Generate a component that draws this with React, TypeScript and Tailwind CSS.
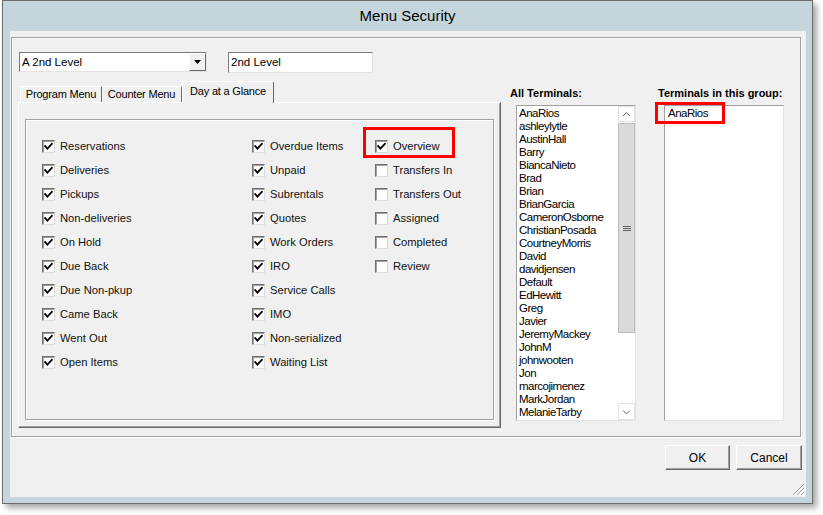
import React from 'react';

const col1 = ['Reservations', 'Deliveries', 'Pickups', 'Non-deliveries', 'On Hold', 'Due Back', 'Due Non-pkup', 'Came Back', 'Went Out', 'Open Items'];
const col2 = ['Overdue Items', 'Unpaid', 'Subrentals', 'Quotes', 'Work Orders', 'IRO', 'Service Calls', 'IMO', 'Non-serialized', 'Waiting List'];
const col3 = [
  { label: 'Overview', checked: true },
  { label: 'Transfers In', checked: false },
  { label: 'Transfers Out', checked: false },
  { label: 'Assigned', checked: false },
  { label: 'Completed', checked: false },
  { label: 'Review', checked: false },
];

const terminals = [
  'AnaRios', 'ashleylytle', 'AustinHall', 'Barry', 'BiancaNieto', 'Brad', 'Brian', 'BrianGarcia',
  'CameronOsborne', 'ChristianPosada', 'CourtneyMorris', 'David', 'davidjensen', 'Default', 'EdHewitt',
  'Greg', 'Javier', 'JeremyMackey', 'JohnM', 'johnwooten', 'Jon', 'marcojimenez', 'MarkJordan', 'MelanieTarby',
];

const CheckBox = ({ checked }: { checked: boolean }) => (
  <div className="flex h-[13px] w-[13px] shrink-0 items-center justify-center border border-[#6f6f6f] border-b-[#dcdcdc] border-r-[#dcdcdc] bg-white shadow-[inset_1px_1px_0_#a0a0a0]">
    {checked && (
      <svg viewBox="0 0 9 9" className="h-[9px] w-[9px]">
        <path d="M1.2 4.2 L3.4 6.6 L7.9 1.9" fill="none" stroke="#000" strokeWidth="1.9" strokeLinecap="square" />
      </svg>
    )}
  </div>
);

const CheckRow = ({ label, checked = true, children }: { label: string; checked?: boolean; children?: React.ReactNode }) => (
  <div className="relative flex h-[24.1px] items-center gap-[5px] text-[11.2px] text-[#111]">
    <CheckBox checked={checked} />
    <span className="whitespace-nowrap">{label}</span>
    {children}
  </div>
);

const Chevron = ({ down }: { down?: boolean }) => (
  <svg viewBox="0 0 9 6" className="h-[6px] w-[9px]">
    <polyline
      points={down ? '1,1.5 4.5,5 8,1.5' : '1,5 4.5,1.5 8,5'}
      fill="none"
      stroke="#606060"
      strokeWidth="1"
    />
  </svg>
);

const ScrollBar = () => (
  <div className="flex w-[17px] flex-col bg-white">
    <div className="flex h-[16px] items-center justify-center border border-[#e3e3e3] bg-white">
      <Chevron />
    </div>
    <div className="mt-px flex h-[210px] flex-col items-center justify-center gap-[1px] border border-[#bdbdbd] bg-[#dadada]">
      <div className="h-px w-[8px] bg-[#606060]" />
      <div className="h-px w-[8px] bg-[#606060]" />
      <div className="h-px w-[8px] bg-[#606060]" />
    </div>
    <div className="flex-1" />
    <div className="flex h-[17px] items-center justify-center border border-[#e3e3e3] bg-white">
      <Chevron down />
    </div>
  </div>
);

const Button = ({ label, w }: { label: string; w: string }) => (
  <button
    type="button"
    className={`${w} h-[25px] border border-l-white border-t-white border-r-[#696969] border-b-[#696969] bg-[#f0f0f0] text-[12px] text-black shadow-[inset_-1px_-1px_0_#a0a0a0]`}
  >
    {label}
  </button>
);

export default function App() {
  return (
    <div className="min-h-screen bg-white font-['Liberation_Sans',Arial,sans-serif]">
      <div className="ml-[2px] flex h-[504px] w-[811px] flex-col border border-[#6b6b6b] bg-[#c4d6dc] shadow-[4px_4px_6px_rgba(0,0,0,0.35)]">
        <div className="flex h-[30px] items-center justify-center text-[15px] text-black">Menu Security</div>

        <div className="relative mb-[6px] ml-[7px] mr-[6px] flex flex-1 flex-col bg-[#f0f0f0] pt-[6px]">
          {/* main panel */}
          <div className="ml-[1px] mr-[5px] flex h-[400px] border border-[#a0a0a0] pl-[6px] shadow-[1px_1px_0_#fff,inset_1px_1px_0_#fff]">
            <div className="flex w-[483px] flex-col pt-[14px]">
              <div className="flex h-[21px] items-start">
                <div className="ml-[1px] flex h-[20px] w-[188px] border border-[#7a7a7a] border-b-[#e3e3e3] border-r-[#e3e3e3] bg-white">
                  <span className="flex-1 pl-[2px] text-[11.5px] leading-[18px] text-black">A 2nd Level</span>
                  <div className="flex w-[17px] items-center justify-center border border-l-white border-t-white border-r-[#696969] border-b-[#696969] bg-[#f0f0f0]">
                    <svg viewBox="0 0 7 4" className="h-[4px] w-[7px]">
                      <polygon points="0,0 7,0 3.5,4" fill="#000" />
                    </svg>
                  </div>
                </div>
                <div className="ml-[21px] h-[21px] w-[145px] border border-[#7a7a7a] border-b-[#e3e3e3] border-r-[#e3e3e3] bg-white pl-[2px] text-[11.5px] leading-[19px] text-black">
                  2nd Level
                </div>
              </div>

              <div className="mt-[8px] flex h-[21px] items-end pl-[2px] text-[11px] tracking-[-0.2px] text-black">
                <div className="flex h-[16px] w-[82px] items-center justify-center rounded-tl-[2px] border-l border-r border-t border-l-white border-r-[#696969] border-t-white">
                  Program Menu
                </div>
                <div className="flex h-[16px] w-[80px] items-center justify-center rounded-tr-[2px] border-r border-t border-r-[#696969] border-t-white">
                  Counter Menu
                </div>
                <div className="relative z-10 -mb-px flex h-[22px] w-[92px] items-start justify-center rounded-t-[2px] border-l border-r border-t border-l-white border-r-[#696969] border-t-white bg-[#f0f0f0] pt-[3px] leading-[13px]">
                  Day at a Glance
                </div>
              </div>

              {/* tab page */}
              <div className="flex h-[326px] flex-col border border-b-[#696969] border-l-white border-r-[#696969] border-t-white px-[6px] pb-[7px] pt-[16px] shadow-[inset_-1px_-1px_0_#a0a0a0]">
                <div className="flex flex-1 border border-[#a0a0a0] pl-[16px] pt-[14px] shadow-[1px_1px_0_#fff,inset_1px_1px_0_#fff]">
                  <div className="flex w-[210px] flex-col">
                    {col1.map((l) => (
                      <CheckRow key={l} label={l} />
                    ))}
                  </div>
                  <div className="flex w-[123px] flex-col">
                    {col2.map((l) => (
                      <CheckRow key={l} label={l} />
                    ))}
                  </div>
                  <div className="flex flex-col">
                    {col3.map((c) => (
                      <CheckRow key={c.label} label={c.label} checked={c.checked}>
                        {c.label === 'Overview' && (
                          <div className="absolute left-[-12px] top-[-7px] h-[31px] w-[92px] border-[3px] border-[#ff0000]" />
                        )}
                      </CheckRow>
                    ))}
                  </div>
                </div>
              </div>
            </div>

            {/* all terminals */}
            <div className="ml-[9px] flex flex-col pt-[49px]">
              <div className="h-[13px] text-[11px] font-bold leading-[13px] text-black">All Terminals:</div>
              <div className="ml-[6px] mt-[5px] flex h-[316px] w-[120px] overflow-hidden border border-[#a0a0a0] border-b-[#e3e3e3] border-r-[#e3e3e3] bg-white">
                <div className="flex-1 overflow-hidden pl-[2px] pt-[1px]">
                  {terminals.map((t) => (
                    <div key={t} className="whitespace-nowrap text-[11.5px] leading-[13px] tracking-[-0.5px] text-black">
                      {t}
                    </div>
                  ))}
                </div>
                <ScrollBar />
              </div>
            </div>

            {/* group terminals */}
            <div className="ml-[22px] flex flex-col pt-[49px]">
              <div className="h-[13px] whitespace-nowrap text-[11px] font-bold leading-[13px] text-black">Terminals in this group:</div>
              <div className="relative ml-[6px] mt-[5px] h-[316px] w-[120px] border border-[#a0a0a0] border-b-[#e3e3e3] border-r-[#e3e3e3] bg-white pl-[3px] pt-[1px]">
                <div className="whitespace-nowrap text-[11.5px] leading-[13px] tracking-[-0.5px] text-black">AnaRios</div>
                <div className="absolute left-[-10px] top-[-4px] h-[22px] w-[70px] border-[3px] border-[#ff0000]" />
              </div>
            </div>
          </div>

          <div className="mt-[8px] flex justify-end gap-[6px] pr-[4px]">
            <Button label="OK" w="w-[65px]" />
            <Button label="Cancel" w="w-[66px]" />
          </div>

          <svg viewBox="0 0 13 13" className="absolute bottom-[1px] right-[1px] h-[13px] w-[13px]">
            <path d="M12 1 L1 12 M12 5 L5 12 M12 9 L9 12" stroke="#a0a0a0" strokeWidth="1" />
            <path d="M12.8 1.8 L1.8 12.8 M12.8 5.8 L5.8 12.8 M12.8 9.8 L9.8 12.8" stroke="#fff" strokeWidth="0.8" />
          </svg>
        </div>
      </div>
    </div>
  );
}
